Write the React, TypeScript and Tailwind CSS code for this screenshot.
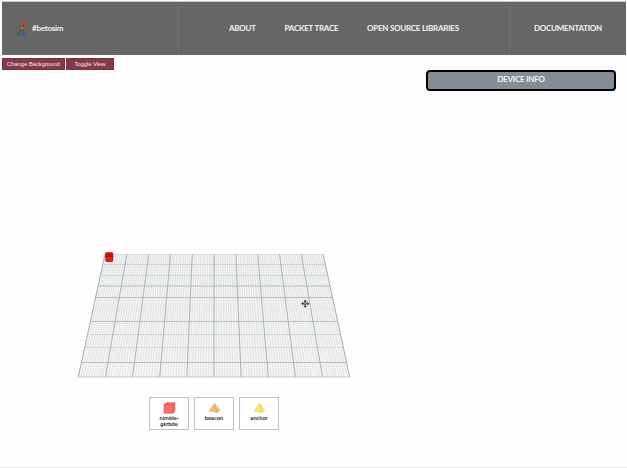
import React from "react";

const ROWS = [254.5, 264.5, 275.5, 286, 297.5, 309, 321.5, 334.5, 347.5, 362.5, 377];

function rowY(i: number) {
  const k = Math.min(9, Math.floor(i / 10));
  return ROWS[k] + (ROWS[k + 1] - ROWS[k]) * ((i - k * 10) / 10);
}

function Floor() {
  const steps = Array.from({ length: 101 }, (_, i) => i);
  const left = (y: number) => 105 - ((y - 254.5) / 122.5) * 26.7;
  const right = (y: number) => 323.2 + ((y - 254.5) / 122.5) * 26.5;
  return (
    <svg className="block h-[144px] w-[290px]" viewBox="70 244 290 144">
      <polygon points="105,254.5 323.2,254.5 349.7,377 78.3,377" fill="#fbfbfb" />
      {steps.map((i) => (
        <line key={"v" + i} x1={105 + i * 2.182} y1={254.5} x2={78.3 + i * 2.714} y2={377} stroke="#949999" strokeOpacity={0.32} strokeWidth={0.65} />
      ))}
      {steps.map((i) => (
        <line key={"h" + i} x1={left(rowY(i))} y1={rowY(i)} x2={right(rowY(i))} y2={rowY(i)} stroke="#a4a8a8" strokeOpacity={0.16} strokeWidth={0.5} />
      ))}
      {ROWS.map((y, i) => (
        <line key={"r" + i} x1={left(y)} y1={y} x2={right(y)} y2={y} stroke={i === 10 ? "#b9c9d0" : "#a5b3b1"} strokeOpacity={i === 5 ? 0.12 : [3, 4, 6, 9, 10].includes(i) ? 0.9 : 0.45} strokeWidth={0.9} />
      ))}
      {Array.from({ length: 11 }, (_, i) => (
        <line key={"c" + i} x1={105 + i * 21.82} y1={254.5} x2={78.3 + i * 27.14} y2={377} stroke={i === 0 || i === 10 ? "#9db0ba" : "#a0b0af"} strokeWidth={0.95} />
      ))}
      <path d="M105 253.5L106 252.3H112.5L113.2 253.5V261L112 262H106.5L105.3 260.5Z" fill="#cf160d" />
      <path d="M106.5 257H112.2V261.5H106.5Z" fill="#f31a0d" />
      <path d="M106 256.2H112.8" stroke="#6c0d09" strokeWidth="0.9" strokeDasharray="2 .7" />
      <g stroke="#222" fill="#222">
        <path d="M302.5 303.7H308M305.2 301V306.5" strokeWidth="0.8" />
        <path d="M305.2 299.9L306.6 301.5H303.8ZM305.2 307.5L303.8 305.9H306.6ZM301.4 303.7L303 302.3V305.1ZM309 303.7L307.4 305.1V302.3Z" strokeWidth="0.3" />
        <circle cx="305.2" cy="303.7" r="1.1" fill="#eee" strokeWidth="0.7" />
      </g>
    </svg>
  );
}

function Logo() {
  return (
    <svg className="h-4 w-3 shrink-0" viewBox="0 0 12 16">
      <path d="M6 8L8.5 3M6 8L2.5 4.5M6 8L9.5 8.5M6 8L2 14M6 8L7.5 14" stroke="#382c28" strokeWidth="0.7" />
      <circle cx="8.3" cy="3" r="1.8" fill="#ec3324" />
      <circle cx="2.8" cy="4.7" r="1.1" fill="#a84a20" />
      <circle cx="9.7" cy="8.3" r="1" fill="#b35328" />
      <circle cx="6" cy="8" r="1.3" fill="#f3a52b" stroke="#743217" strokeWidth="0.5" />
      <circle cx="2.2" cy="14" r="1.6" fill="#226547" />
      <circle cx="7.6" cy="14.2" r="1.6" fill="#2857cd" />
    </svg>
  );
}

function Cube() {
  return (
    <svg className="h-3 w-[13px]" viewBox="0 0 13 12">
      <path d="M1 2.5L3.5.7H12V9L10 11.2H1Z" fill="#f97068" stroke="#b94942" strokeWidth="0.5" />
      <path d="M1 2.5H10L12 .8M10 2.5V11" fill="none" stroke="#b74b43" strokeWidth="0.5" />
    </svg>
  );
}

function Pyramid({ fill, edge }: { fill: string; edge: string }) {
  return (
    <svg className="h-3 w-[13px]" viewBox="0 0 13 12">
      <path d="M6.5 1.6L12 8.5L9 10.5L1 9Z" fill={fill} stroke={edge} strokeWidth="0.35" />
      <path d="M6.5 1.6L9 10.5" stroke={edge} strokeWidth="0.4" />
    </svg>
  );
}

function Device({ children, label }: { children: React.ReactNode; label: React.ReactNode }) {
  return (
    <div className="flex h-[33px] w-10 flex-col items-center border border-[#c0c0c0] bg-white pt-[4px] text-center font-['DejaVu_Sans',sans-serif] text-[5px] leading-[6px] text-[#111] [-webkit-text-stroke:0.15px_#111]">
      {children}
      <span className="mt-px">{label}</span>
    </div>
  );
}

export default function App() {
  return (
    <div className="flex h-[468px] w-[627px] flex-col overflow-hidden border-b border-[#e6e6e6] bg-[#fefefe] pl-[2px] pr-px pt-px font-[Lato,sans-serif]">
      <header className="flex h-[54px] shrink-0 border-t border-[#c5cacb] bg-[#666666] pb-[2px] text-[8px] font-bold tracking-[-0.24px] text-[#f4f4f4]">
        <div className="-mb-[2px] flex w-[177px] items-center border-r border-[#6f6f6f] pb-[2px] pl-[14px]">
          <Logo />
          <span className="ml-[4px] tracking-[-0.24px]">#betosim</span>
        </div>
        <nav className="-mb-[2px] flex w-[331px] items-center whitespace-nowrap border-r border-[#6f6f6f] pb-[2px] pl-[50px]">
          <span className="w-[55.5px]">ABOUT</span>
          <span className="w-[82.5px]">PACKET TRACE</span>
          <span>OPEN SOURCE LIBRARIES</span>
        </nav>
        <div className="flex flex-1 items-center justify-center">DOCUMENTATION</div>
      </header>
      <main className="flex justify-between">
        <section className="w-[380px]">
          <div className="mt-[3px] flex gap-[1.5px] font-['Liberation_Sans',sans-serif] text-[6px] tracking-[-0.1px] text-[#f0e4e7]">
            <button className="h-3 w-[62.5px] whitespace-nowrap border border-[#75303f] bg-[#853a4c] pt-px">Change Background</button>
            <button className="h-3 w-[48px] whitespace-nowrap border border-[#75303f] bg-[#853a4c] pt-px">Toggle View</button>
          </div>
          <div className="ml-[68px] mt-[174px]">
            <Floor />
          </div>
          <div className="ml-[147px] mt-[9px] flex gap-[5px]">
            <Device label={<>nimble-<br />gkrbde</>}><Cube /></Device>
            <Device label="beacon"><Pyramid fill="#f3bf62" edge="#b48c4f" /></Device>
            <Device label="anchor"><Pyramid fill="#f4eb62" edge="#bcb55d" /></Device>
          </div>
        </section>
        <aside className="mr-[10px] mt-[15px] h-[21px] w-[190px] rounded-[4px] border-2 border-black bg-[#838d98] text-center text-[8px] font-bold leading-[15px] tracking-[-0.2px] text-[#f5f5f5]">
          DEVICE INFO
        </aside>
      </main>
    </div>
  );
}
